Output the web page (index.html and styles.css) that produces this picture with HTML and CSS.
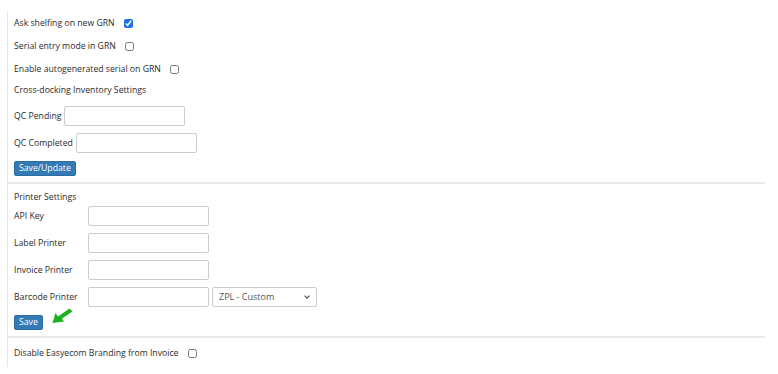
FILE: index.html
```html
<!DOCTYPE html>
<html lang="en">
<head>
    <meta charset="UTF-8">
    <title>Settings</title>
    <link rel="stylesheet" href="styles.css">
</head>
<body>
    <div class="panel">
        <div class="section">
            <div class="check-row">Ask shelfing on new GRN <input type="checkbox" checked></div>
            <div class="check-row">Serial entry mode in GRN <input type="checkbox"></div>
            <div class="check-row">Enable autogenerated serial on GRN <input type="checkbox"></div>
            <div class="heading">Cross-docking Inventory Settings</div>
            <div class="qc-row">QC Pending <input type="text" class="field"></div>
            <div class="qc-row">QC Completed <input type="text" class="field"></div>
            <button class="btn">Save/Update</button>
        </div>

        <div class="section printer">
            <div class="heading">Printer Settings</div>
            <div class="form-row"><label>API Key</label><input type="text" class="field"></div>
            <div class="form-row"><label>Label Printer</label><input type="text" class="field"></div>
            <div class="form-row"><label>Invoice Printer</label><input type="text" class="field"></div>
            <div class="form-row">
                <label>Barcode Printer</label><input type="text" class="field">
                <span class="picker-wrap">
                    <select class="picker"><option>ZPL - Custom</option></select>
                </span>
            </div>
            <div class="save-row">
                <button class="btn">Save</button>
                <!-- pointer arrow -->
                <svg class="arrow" width="22" height="16" viewBox="0 0 22 16">
                    <path d="M18.5 0.5 L21.5 3.5 L11 10.5 L13 13.5 L1.5 15 L4.5 5 L7 8.5 Z" fill="#1db31d"/>
                </svg>
            </div>
        </div>

        <div class="section last">
            <div class="check-row">Disable Easyecom Branding from Invoice <input type="checkbox"></div>
        </div>
    </div>
</body>
</html>
```

FILE: styles.css
```css
body {
    margin: 0;
    background: #fff;
    font-family: 'Open Sans', sans-serif;
    font-size: 8.7px;
    color: #2b2b2b;
}
.panel {
    margin: 11px 13px 0 7px;
    border-left: 1px solid #e6e6e6;
    height: 356px;
}
.section {
    padding: 0 0 6px 6px;
    border-bottom: 2px solid #e8e8e8;
}
.section.last {
    border-bottom: none;
    padding-top: 3px;
}
.check-row {
    height: 23px;
    display: flex;
    align-items: center;
}
.check-row input {
    width: 9px;
    height: 9px;
    margin: 1px 0 0 9px;
    accent-color: #1a73e8;
}
.heading {
    height: 22px;
    padding-top: 4px;
    box-sizing: border-box;
    line-height: 12px;
}
.qc-row {
    height: 27px;
    display: flex;
    align-items: center;
}
.qc-row .field {
    margin-left: 3px;
}
.field {
    width: 121px;
    height: 20px;
    box-sizing: border-box;
    border: 1px solid #ccc;
    border-radius: 2px;
    margin: 0 0 0 2px;
    padding: 0 4px;
    font: inherit;
}
.btn {
    background: #337ab7;
    color: #fff;
    border: 1px solid #2e6da4;
    border-radius: 2px;
    font-family: 'Open Sans', sans-serif;
    font-size: 8.7px;
    height: 15px;
    line-height: 13px;
    padding: 0 4px;
    margin-top: 5px;
    display: block;
}
.printer {
    padding-top: 7px;
}
.printer .heading {
    height: 11px;
    padding-top: 0;
}
.form-row {
    height: 27px;
    display: flex;
    align-items: center;
}
.form-row label {
    width: 72px;
}
.picker-wrap {
    position: relative;
    margin-left: 3px;
}
.picker {
    appearance: none;
    width: 105px;
    height: 20px;
    border: 1px solid #ccc;
    border-radius: 2px;
    background: #fff;
    padding: 0 6px;
    font-family: 'Open Sans', sans-serif;
    font-size: 9px;
    color: #555;
    display: block;
}
.picker-wrap::after {
    content: "";
    position: absolute;
    right: 8px;
    top: 7px;
    width: 3px;
    height: 3px;
    border-right: 1.5px solid #444;
    border-bottom: 1.5px solid #444;
    transform: rotate(45deg);
}
.save-row {
    display: flex;
    align-items: flex-start;
}
.save-row .btn {
    margin-top: 5px;
}
.arrow {
    margin: -2px 0 0 8px;
}
```
